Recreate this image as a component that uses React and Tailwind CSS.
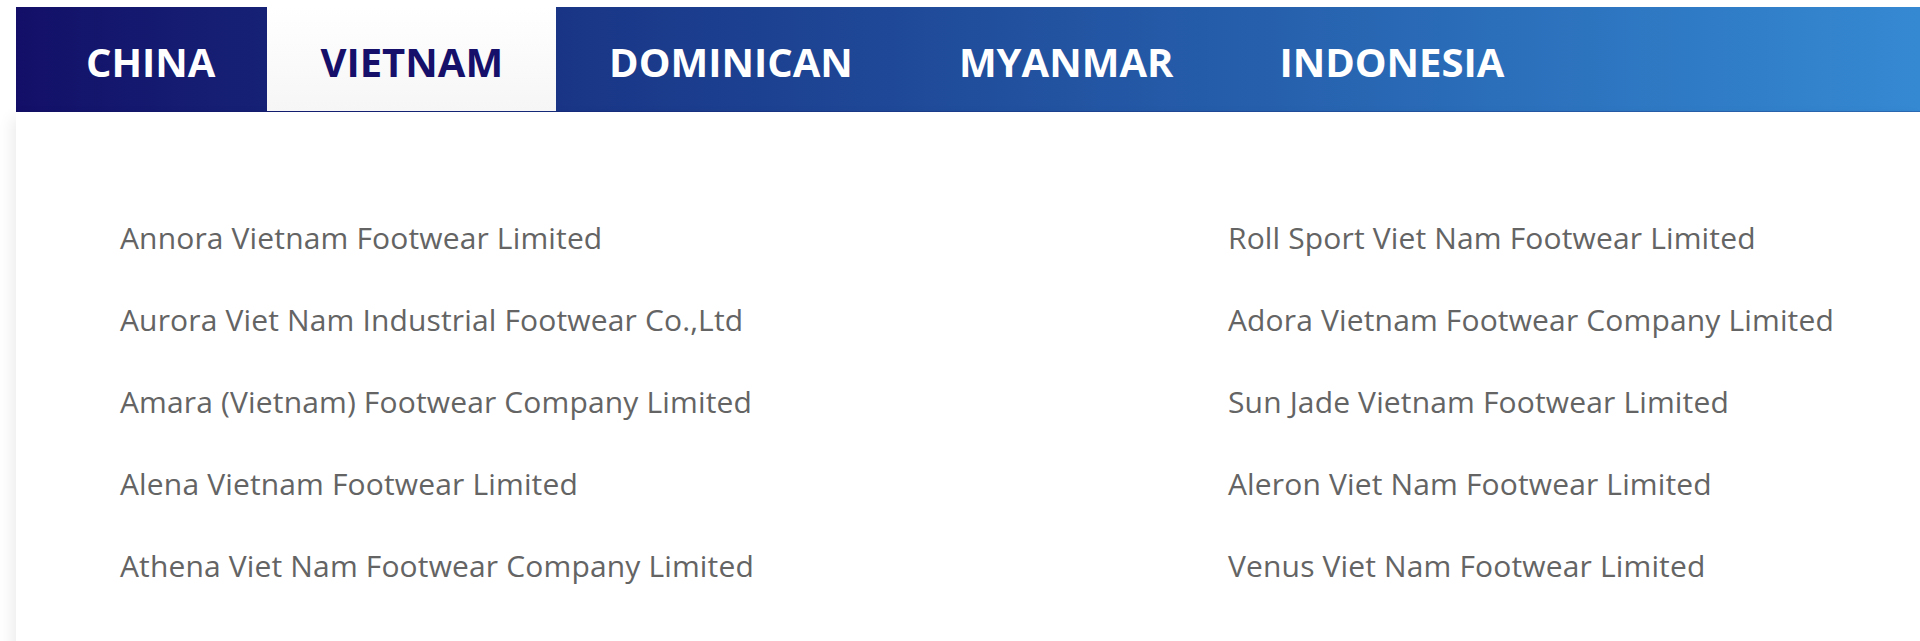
import React from "react";

const tabs = ["CHINA", "VIETNAM", "DOMINICAN", "MYANMAR", "INDONESIA"];
const left = [
  "Annora Vietnam Footwear Limited",
  "Aurora Viet Nam Industrial Footwear Co.,Ltd",
  "Amara (Vietnam) Footwear Company Limited",
  "Alena Vietnam Footwear Limited",
  "Athena Viet Nam Footwear Company Limited",
];
const right = [
  "Roll Sport Viet Nam Footwear Limited",
  "Adora Vietnam Footwear Company Limited",
  "Sun Jade Vietnam Footwear Limited",
  "Aleron Viet Nam Footwear Limited",
  "Venus Viet Nam Footwear Limited",
];

export default function App() {
  return (
    <div className="min-h-[641px] bg-white pt-[7px] pl-[16px] overflow-hidden" style={{ fontFamily: '"Open Sans", "Noto Sans", sans-serif' }}>
      <div className="flex h-[105px] bg-gradient-to-r from-[#130f68] to-[#3589d2] border-b border-[#101060]/25">
        {tabs.map((t, i) => {
          const active = t === "VIETNAM";
          return (
            <div
              key={t}
              className={
                "flex items-center pt-[6px] text-[40px] font-bold leading-none tracking-normal " +
                (i === 0 ? "pl-[70px] pr-[52px] " : "px-[53px] ") +
                (active ? "bg-gradient-to-b from-white to-[#f6f6f6] text-[#16106a]" : "text-white")
              }
            >
              {t}
            </div>
          );
        })}
      </div>
      <div className="flex bg-white pt-[85px] pb-[60px] pl-[104px] shadow-[-4px_6px_14px_rgba(0,0,0,0.08)]">
        <div className="w-[1108px] flex flex-col">
          {left.map((n) => (
            <div key={n} className="h-[82px] leading-[82px] text-[30px] tracking-[0.15px] text-[#646464]">{n}</div>
          ))}
        </div>
        <div className="flex flex-col">
          {right.map((n) => (
            <div key={n} className="h-[82px] leading-[82px] text-[30px] tracking-[0.15px] text-[#646464]">{n}</div>
          ))}
        </div>
      </div>
    </div>
  );
}
